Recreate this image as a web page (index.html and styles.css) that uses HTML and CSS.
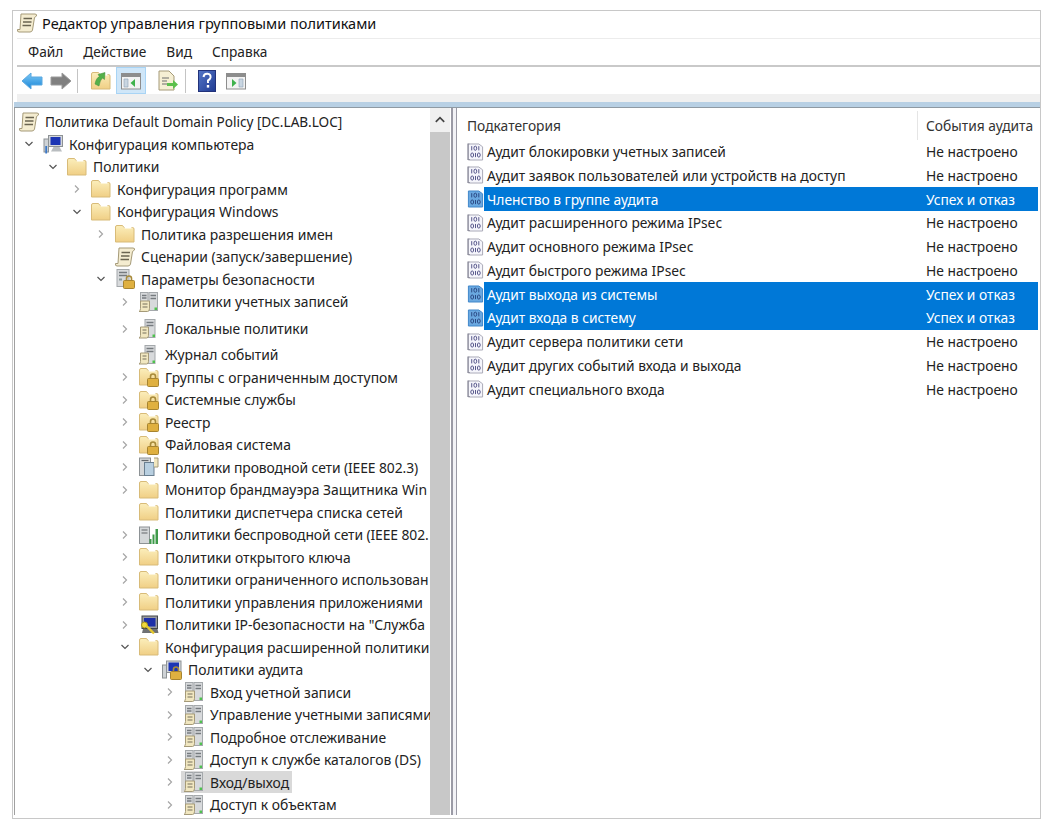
FILE: index.html
```html
<!DOCTYPE html>
<html lang="ru">
<head>
    <meta charset="UTF-8">
    <meta name="viewport" content="width=device-width, initial-scale=1.0">
    <title>Редактор управления групповыми политиками</title>
    <link rel="stylesheet" href="styles.css">
</head>
<body>
    <svg class="defs" xmlns="http://www.w3.org/2000/svg">
        <defs>
            <linearGradient id="gFolder" x1="0" y1="0" x2="0" y2="1"><stop offset="0" stop-color="#fbeebb"/><stop offset="1" stop-color="#f0cf85"/></linearGradient>
            <linearGradient id="gBlue" x1="0" y1="0" x2="0" y2="1"><stop offset="0" stop-color="#7cc8f5"/><stop offset="1" stop-color="#1a86d8"/></linearGradient>
            <linearGradient id="gHelp" x1="0" y1="0" x2="1" y2="1"><stop offset="0" stop-color="#5577c8"/><stop offset="1" stop-color="#1f3a92"/></linearGradient>
            <symbol id="chevR" viewBox="0 0 10 10"><path d="M3 1.5 L6.5 5 L3 8.5" fill="none" stroke="#a6a6a6" stroke-width="1.2"/></symbol>
            <symbol id="chevD" viewBox="0 0 10 10"><path d="M1.5 3 L5 6.5 L8.5 3" fill="none" stroke="#555" stroke-width="1.2"/></symbol>
            <symbol id="scroll" viewBox="0 0 20 20">
                <path d="M4 1 H18 Q20 1 19.500 3 L17.500 4.500 L15.500 17 Q15 19 13 19 H2 Q0 19 .5 16.500 H3 Z" fill="#f4ecd0" stroke="#a59a78"/>
                <path d="M6.500 5.500 H15 M6 9 H14.500 M5.500 12.500 H14" stroke="#6a6450" stroke-width="1.400"/>
            </symbol>
            <symbol id="folder" viewBox="0 0 20 20">
                <path d="M.5 3 Q.5 1.500 2 1.500 H7.500 L9 3.500 H17.500 Q19 3.500 19 5 V18 H.5 Z" fill="url(#gFolder)" stroke="#d8bb78"/>
                <path d="M9 2.200 H16.500 V4.500 H10 Z" fill="#fff"/>
            </symbol>
            <symbol id="lock" viewBox="0 0 20 20">
                <path d="M11.500 12 V9.500 Q11.500 7 14 7 Q16.500 7 16.500 9.500 V12" fill="none" stroke="#a78a3a" stroke-width="1.600"/>
                <rect x="8.500" y="11.500" width="11" height="8" rx="1" fill="#dfb040" stroke="#a78430"/>
            </symbol>
            <symbol id="folderLock" viewBox="0 0 20 20">
                <use href="#folder" width="20" height="20"/>
                <use href="#lock" width="20" height="20"/>
            </symbol>
            <symbol id="tower" viewBox="1 0 20 20">
                <rect x="7" y="0.500" width="10" height="18" fill="#d8dadc" stroke="#a4a8ab"/>
                <path d="M8.500 3.500 H15.500 M8.500 6.500 H15.500" stroke="#767b7f" stroke-width="1.400"/>
                <rect x="14.500" y="15.500" width="2.500" height="2.500" fill="#4ec24e"/>
                <path d="M2.500 8 H10.500 V16.500 Q10.500 19 8.500 19 H1 Q2.500 18.500 2.500 16.500 Z" fill="#f1e7c0" stroke="#a59a78"/>
                <path d="M4.500 11 H8.500 M4.500 14 H8.500" stroke="#77705c" stroke-width="1.200"/>
            </symbol>
            <symbol id="towers" viewBox="1 0 20 20">
                <rect x="2.500" y="0.500" width="7.500" height="13" fill="#d8dadc" stroke="#a4a8ab"/>
                <rect x="11" y="0.500" width="8.500" height="18" fill="#d8dadc" stroke="#a4a8ab"/>
                <path d="M4 3.500 H8.500 M4 6 H8.500 M12.500 3.500 H18 M12.500 6.500 H18" stroke="#767b7f" stroke-width="1.400"/>
                <rect x="16.500" y="15.500" width="2.500" height="2.500" fill="#4ec24e"/>
                <path d="M2.500 9 H11.500 V16.500 Q11.500 19.500 9.500 19.500 H1 Q2.500 18.500 2.500 16.500 Z" fill="#f1e7c0" stroke="#a59a78"/>
                <path d="M4.500 12 H9.500 M4.500 15 H9.500" stroke="#77705c" stroke-width="1.200"/>
            </symbol>
            <symbol id="serverLock" viewBox="0 0 20 20">
                <rect x="2" y="0.500" width="12" height="17" fill="#d8dadc" stroke="#a4a8ab"/>
                <path d="M4 3.500 H12 M4 6.500 H12" stroke="#767b7f" stroke-width="1.400"/>
                <rect x="4" y="9.500" width="3" height="2" fill="#8a9a9a"/>
                <use href="#lock" width="20" height="20"/>
            </symbol>
            <symbol id="comp" viewBox="0 0 20 20">
                <rect x="1" y="5" width="4.500" height="13" fill="#cfd3d6" stroke="#8d9295"/>
                <rect x="5.500" y="1.500" width="14" height="11" fill="#d4d7da" stroke="#8d9295"/>
                <rect x="7.500" y="3" width="10" height="8" fill="#1c35b4"/>
                <path d="M8 17.500 H19 L16.500 13 H10.500 Z" fill="#b9bdc0"/>
                <path d="M3.200 12 V19.500" stroke="#3a77c7" stroke-width="1.800"/>
            </symbol>
            <symbol id="compLock" viewBox="0 0 20 20">
                <rect x=".5" y="5" width="4" height="13" fill="#cfd3d6" stroke="#8d9295"/>
                <rect x="4.500" y="1" width="14.500" height="11.500" fill="#d4d7da" stroke="#8d9295"/>
                <rect x="6.500" y="2.500" width="10.500" height="8.500" fill="#1c35b4"/>
                <use href="#lock" width="20" height="20"/>
            </symbol>
            <symbol id="ipsec" viewBox="0 0 20 20">
                <rect x="3" y="1" width="15.500" height="12.500" fill="#9a9c9f" stroke="#44474a"/>
                <rect x="5" y="3" width="11.500" height="8.500" fill="#1d2fa8"/>
                <path d="M4 14 H18.500 L19.500 18 H3 Z" fill="#6f7174"/>
                <circle cx="5.500" cy="10" r="3" fill="#f0d83c" stroke="#a48f17"/>
                <path d="M7.500 11 L15 18.500" stroke="#e5c92e" stroke-width="2.400"/>
            </symbol>
            <symbol id="wired" viewBox="0 0 20 20">
                <rect x=".5" y="1" width="11" height="17.500" fill="#d4d7d9" stroke="#8d9295"/>
                <rect x="5.500" y="5.500" width="9.500" height="13" fill="#b8cfe0" stroke="#6a7f90"/>
                <path d="M2.500 3.500 H9.500" stroke="#62676b" stroke-width="1.200"/>
                <path d="M15 1 H19 V10 H15" fill="#f1e7c0" stroke="#a59a78"/>
            </symbol>
            <symbol id="wifi" viewBox="0 0 20 20">
                <rect x=".5" y="2" width="10" height="16.500" fill="#d4d7d9" stroke="#8d9295"/>
                <path d="M2.500 5 H8.500 M2.500 8 H8.500" stroke="#62676b" stroke-width="1.200"/>
                <path d="M10.500 19 V14 H12.500 V19 Z M13.500 19 V9.500 H15.500 V19 Z M16.500 19 V4 H19 V19 Z" fill="#3f9a4a"/>
            </symbol>
            <symbol id="bin" viewBox="0 0 18 20">
                <path d="M1.500 1.500 H12.500 L16.500 4.500 V18.500 H1.500 Z" fill="#f5f5fb" stroke="#a7a7b5"/>
                <path d="M2.500 1.500 H1 V18 H3" fill="none" stroke="#8d8d9b" stroke-width="1.200"/>
                <g fill="none" stroke="#4f4f85">
                    <ellipse cx="8.800" cy="6" rx="1.500" ry="2.200"/>
                    <ellipse cx="5.500" cy="13.200" rx="1.500" ry="2.200"/>
                    <ellipse cx="12.500" cy="13.200" rx="1.500" ry="2.200"/>
                    <path d="M5 3.800 V8.300 M12.500 3.800 V8.300 M9 11 V15.400"/>
                </g>
            </symbol>
            <symbol id="binSel" viewBox="0 0 18 20">
                <path d="M1.500 1.500 H12.500 L16.500 4.500 V18.500 H1.500 Z" fill="#6aa8e0" stroke="#3b84c8"/>
                <g fill="none" stroke="#27447f">
                    <ellipse cx="8.800" cy="6" rx="1.500" ry="2.200"/>
                    <ellipse cx="5.500" cy="13.200" rx="1.500" ry="2.200"/>
                    <ellipse cx="12.500" cy="13.200" rx="1.500" ry="2.200"/>
                    <path d="M5 3.800 V8.300 M12.500 3.800 V8.300 M9 11 V15.400"/>
                </g>
            </symbol>
        </defs>
    </svg>

    <div class="window">
        <div class="titlebar">
            <svg class="title-icon"><use href="#scroll"/></svg>
            <span>Редактор управления групповыми политиками</span>
        </div>
        <div class="menubar">
            <span>Файл</span>
            <span>Действие</span>
            <span>Вид</span>
            <span>Справка</span>
        </div>
        <div class="toolbar">
            <svg class="tool tool-back" viewBox="0 0 22 18"><path d="M1 9 L10 1 V5 H21 V13 H10 V17 Z" fill="url(#gBlue)" stroke="#5aa8e0"/></svg>
            <svg class="tool tool-fwd" viewBox="0 0 22 18"><path d="M21 9 L12 1 V5 H1 V13 H12 V17 Z" fill="#808080" stroke="#9a9a9a"/></svg>
            <div class="tool-sep"></div>
            <svg class="tool tool-up" viewBox="0 0 20 20">
                <use href="#folder" width="20" height="20"/>
                <path d="M4 13 Q5 7 8.500 5.500 L7 3.500 L14 1.500 L13.500 8.500 L11.500 7 Q9 9 8 15 Z" fill="#54b04a" stroke="#3b8c36" stroke-width=".5"/>
            </svg>
            <div class="tool-active">
                <svg class="tool-pane" viewBox="0 0 20 18">
                    <rect x=".5" y="1.500" width="19" height="15.500" fill="#f3f3f3" stroke="#8d8d8d"/>
                    <rect x=".5" y="1.500" width="19" height="3.500" fill="#8d8d8d"/>
                    <path d="M3 7 H7 V15 H3 Z" fill="#c9d6e2" stroke="#8fa3b5" stroke-width=".6"/>
                    <path d="M14 7 V15 L9.500 11 Z" fill="#3fb24c"/>
                </svg>
            </div>
            <svg class="tool tool-export" viewBox="0 0 22 22">
                <path d="M2 1 H12 L17 6 V20 H2 Z" fill="#f6efd4" stroke="#a59a78"/>
                <path d="M5 8 H12 M5 11 H10 M5 14 H10" stroke="#6d6d6d"/>
                <path d="M10 13 H16 V10 L21 14.500 L16 19 V16 H10 Z" fill="#5cc04c"/>
            </svg>
            <div class="tool-sep sep-two"></div>
            <svg class="tool tool-help" viewBox="0 0 18 22">
                <rect x=".5" y=".5" width="17" height="21" fill="url(#gHelp)" stroke="#22327a"/>
                <path d="M5.500 7 Q6 3.500 9.500 3.800 Q13 4.300 12.500 7.500 Q12 9.500 10 10.500 V13" fill="none" stroke="#fff" stroke-width="2"/>
                <rect x="8.800" y="15" width="2.400" height="2.600" fill="#fff"/>
            </svg>
            <svg class="tool-pane tool-pane-right" viewBox="0 0 20 18">
                <rect x=".5" y="1.500" width="19" height="15.500" fill="#f3f3f3" stroke="#8d8d8d"/>
                <rect x=".5" y="1.500" width="19" height="3.500" fill="#8d8d8d"/>
                <path d="M13 7 H17 V15 H13 Z" fill="#c9d6e2" stroke="#8fa3b5" stroke-width=".6"/>
                <path d="M6 7 V15 L10.500 11 Z" fill="#3fb24c"/>
            </svg>
        </div>
        <div class="strip"></div>
        <div class="band"></div>

        <div class="panes">
            <div class="tree-pane">
                <div class="tree">
                    <div class="row root"><svg class="ico"><use href="#scroll"/></svg><span>Политика Default Domain Policy [DC.LAB.LOC]</span></div>
                    <div class="row l1"><svg class="chev"><use href="#chevD"/></svg><svg class="ico"><use href="#comp"/></svg><span>Конфигурация компьютера</span></div>
                    <div class="row l2"><svg class="chev"><use href="#chevD"/></svg><svg class="ico"><use href="#folder"/></svg><span>Политики</span></div>
                    <div class="row l3"><svg class="chev"><use href="#chevR"/></svg><svg class="ico"><use href="#folder"/></svg><span>Конфигурация программ</span></div>
                    <div class="row l3"><svg class="chev"><use href="#chevD"/></svg><svg class="ico"><use href="#folder"/></svg><span>Конфигурация Windows</span></div>
                    <div class="row l4"><svg class="chev"><use href="#chevR"/></svg><svg class="ico"><use href="#folder"/></svg><span>Политика разрешения имен</span></div>
                    <div class="row l4"><span class="chev"></span><svg class="ico"><use href="#scroll"/></svg><span>Сценарии (запуск/завершение)</span></div>
                    <div class="row l4"><svg class="chev"><use href="#chevD"/></svg><svg class="ico"><use href="#serverLock"/></svg><span>Параметры безопасности</span></div>
                    <div class="row l5"><svg class="chev"><use href="#chevR"/></svg><svg class="ico"><use href="#towers"/></svg><span>Политики учетных записей</span></div>
                    <div class="row l5 gap-wide"><svg class="chev"><use href="#chevR"/></svg><svg class="ico"><use href="#tower"/></svg><span>Локальные политики</span></div>
                    <div class="row l5 gap-mid"><span class="chev"></span><svg class="ico"><use href="#tower"/></svg><span>Журнал событий</span></div>
                    <div class="row l5"><svg class="chev"><use href="#chevR"/></svg><svg class="ico"><use href="#folderLock"/></svg><span>Группы с ограниченным доступом</span></div>
                    <div class="row l5"><svg class="chev"><use href="#chevR"/></svg><svg class="ico"><use href="#folderLock"/></svg><span>Системные службы</span></div>
                    <div class="row l5"><svg class="chev"><use href="#chevR"/></svg><svg class="ico"><use href="#folderLock"/></svg><span>Реестр</span></div>
                    <div class="row l5"><svg class="chev"><use href="#chevR"/></svg><svg class="ico"><use href="#folderLock"/></svg><span>Файловая система</span></div>
                    <div class="row l5 tight"><svg class="chev"><use href="#chevR"/></svg><svg class="ico"><use href="#wired"/></svg><span>Политики проводной сети (IEEE 802.3)</span></div>
                    <div class="row l5"><svg class="chev"><use href="#chevR"/></svg><svg class="ico"><use href="#folder"/></svg><span>Монитор брандмауэра Защитника Win</span></div>
                    <div class="row l5"><span class="chev"></span><svg class="ico"><use href="#folder"/></svg><span>Политики диспетчера списка сетей</span></div>
                    <div class="row l5 tight"><svg class="chev"><use href="#chevR"/></svg><svg class="ico"><use href="#wifi"/></svg><span>Политики беспроводной сети (IEEE 802.</span></div>
                    <div class="row l5"><svg class="chev"><use href="#chevR"/></svg><svg class="ico"><use href="#folder"/></svg><span>Политики открытого ключа</span></div>
                    <div class="row l5"><svg class="chev"><use href="#chevR"/></svg><svg class="ico"><use href="#folder"/></svg><span>Политики ограниченного использован</span></div>
                    <div class="row l5"><svg class="chev"><use href="#chevR"/></svg><svg class="ico"><use href="#folder"/></svg><span>Политики управления приложениями</span></div>
                    <div class="row l5"><svg class="chev"><use href="#chevR"/></svg><svg class="ico"><use href="#ipsec"/></svg><span>Политики IP-безопасности на "Служба</span></div>
                    <div class="row l5"><svg class="chev"><use href="#chevD"/></svg><svg class="ico"><use href="#folder"/></svg><span>Конфигурация расширенной политики</span></div>
                    <div class="row l6"><svg class="chev"><use href="#chevD"/></svg><svg class="ico"><use href="#compLock"/></svg><span>Политики аудита</span></div>
                    <div class="row l7"><svg class="chev"><use href="#chevR"/></svg><svg class="ico"><use href="#towers"/></svg><span>Вход учетной записи</span></div>
                    <div class="row l7"><svg class="chev"><use href="#chevR"/></svg><svg class="ico"><use href="#towers"/></svg><span>Управление учетными записями</span></div>
                    <div class="row l7"><svg class="chev"><use href="#chevR"/></svg><svg class="ico"><use href="#towers"/></svg><span>Подробное отслеживание</span></div>
                    <div class="row l7"><svg class="chev"><use href="#chevR"/></svg><svg class="ico"><use href="#towers"/></svg><span>Доступ к службе каталогов (DS)</span></div>
                    <div class="row l7 current"><svg class="chev"><use href="#chevR"/></svg><div class="current-box"><svg class="ico"><use href="#towers"/></svg><span>Вход/выход</span></div></div>
                    <div class="row l7"><svg class="chev"><use href="#chevR"/></svg><svg class="ico"><use href="#towers"/></svg><span>Доступ к объектам</span></div>
                </div>
                <div class="scrollbar">
                    <div class="scroll-up"><svg viewBox="0 0 10 10"><path d="M1.500 6.500 L5 3 L8.500 6.500" fill="none" stroke="#444" stroke-width="1.400"/></svg></div>
                    <div class="scroll-thumb"></div>
                </div>
            </div>
            <div class="splitter"></div>
            <div class="list-pane">
                <div class="list-head">
                    <div class="col-name">Подкатегория</div>
                    <div class="col-value">События аудита</div>
                </div>
                <div class="item"><svg class="bin"><use href="#bin"/></svg><div class="cells"><div class="col-name">Аудит блокировки учетных записей</div><div class="col-value">Не настроено</div></div></div>
                <div class="item"><svg class="bin"><use href="#bin"/></svg><div class="cells"><div class="col-name">Аудит заявок пользователей или устройств на доступ</div><div class="col-value">Не настроено</div></div></div>
                <div class="item selected"><svg class="bin"><use href="#binSel"/></svg><div class="cells"><div class="col-name">Членство в группе аудита</div><div class="col-value">Успех и отказ</div></div></div>
                <div class="item"><svg class="bin"><use href="#bin"/></svg><div class="cells"><div class="col-name">Аудит расширенного режима IPsec</div><div class="col-value">Не настроено</div></div></div>
                <div class="item"><svg class="bin"><use href="#bin"/></svg><div class="cells"><div class="col-name">Аудит основного режима IPsec</div><div class="col-value">Не настроено</div></div></div>
                <div class="item"><svg class="bin"><use href="#bin"/></svg><div class="cells"><div class="col-name">Аудит быстрого режима IPsec</div><div class="col-value">Не настроено</div></div></div>
                <div class="item selected"><svg class="bin"><use href="#binSel"/></svg><div class="cells"><div class="col-name">Аудит выхода из системы</div><div class="col-value">Успех и отказ</div></div></div>
                <div class="item selected"><svg class="bin"><use href="#binSel"/></svg><div class="cells"><div class="col-name">Аудит входа в систему</div><div class="col-value">Успех и отказ</div></div></div>
                <div class="item"><svg class="bin"><use href="#bin"/></svg><div class="cells"><div class="col-name">Аудит сервера политики сети</div><div class="col-value">Не настроено</div></div></div>
                <div class="item"><svg class="bin"><use href="#bin"/></svg><div class="cells"><div class="col-name">Аудит других событий входа и выхода</div><div class="col-value">Не настроено</div></div></div>
                <div class="item"><svg class="bin"><use href="#bin"/></svg><div class="cells"><div class="col-name">Аудит специального входа</div><div class="col-value">Не настроено</div></div></div>
            </div>
        </div>
    </div>
</body>
</html>
```

FILE: styles.css
```css
* {
    box-sizing: border-box;
}
html, body {
    height: 100%;
}
body {
    margin: 0;
    padding: 10px 0 0 12px;
    background: white;
    font-family: "Noto Sans", "Open Sans", sans-serif;
    font-size: 13.9px;
    color: #222;
    overflow: hidden;
}
.defs {
    display: block;
    width: 0;
    height: 0;
}
.window {
    width: 1029px;
    height: 809px;
    border: 1px solid #c8c8c8;
    display: flex;
    flex-direction: column;
    overflow: hidden;
}
.titlebar {
    height: 27px;
    padding: 0 0 3px 4px;
    display: flex;
    align-items: center;
    font-size: 14.5px;
    color: #111;
    flex: none;
}
.title-icon {
    width: 20px;
    height: 20px;
    margin-right: 5px;
}
.menubar {
    height: 27px;
    margin-left: 4px;
    padding: 0 0 2px 11px;
    border-top: 1px solid #ececec;
    display: flex;
    align-items: center;
    gap: 20px;
    font-size: 13.7px;
    flex: none;
}
.toolbar {
    height: 29px;
    margin-left: 4px;
    border-top: 2px solid #c9c9c9;
    display: flex;
    align-items: center;
    flex: none;
}
.tool-back {
    width: 22px;
    height: 18px;
    margin-left: 4px;
}
.tool-fwd {
    width: 22px;
    height: 18px;
    margin-left: 7px;
}
.tool-sep {
    width: 1px;
    height: 24px;
    background: #c4c4c4;
    margin-left: 5px;
}
.tool-up {
    width: 20px;
    height: 20px;
    margin-left: 13px;
}
.tool-active {
    width: 30px;
    height: 27px;
    margin-left: 5px;
    background: #cfe6f8;
    border: 1px solid #a8d4f5;
    display: flex;
    align-items: center;
    justify-content: center;
}
.tool-pane {
    width: 20px;
    height: 18px;
}
.tool-export {
    width: 22px;
    height: 22px;
    margin-left: 11px;
}
.sep-two {
    margin-left: 6px;
}
.tool-help {
    width: 18px;
    height: 22px;
    margin-left: 12px;
}
.tool-pane-right {
    margin-left: 10px;
}
.strip {
    height: 8px;
    margin-left: 4px;
    background: #f0f0f0;
    flex: none;
}
.band {
    height: 6px;
    margin-left: 1px;
    background: #b8d0e4;
    border-bottom: 1px solid #8f9aa3;
    flex: none;
}
.panes {
    flex: 1;
    min-height: 0;
    margin: 0 0 3px 1px;
    display: flex;
}
.tree-pane {
    width: 436px;
    border-left: 1px solid #a0a0a0;
    display: flex;
    flex: none;
}
.tree {
    width: 415px;
    padding-top: 2.5px;
    overflow: hidden;
    flex: none;
}
.row {
    height: 22.5px;
    display: flex;
    align-items: center;
    white-space: nowrap;
}
.row.root {
    padding-left: 4px;
    font-size: 13.6px;
}
.row.gap-wide {
    margin-top: 4.5px;
}
.row.gap-mid {
    margin-top: 3.5px;
}
.row.tight {
    letter-spacing: -.1px;
}
.l1 { padding-left: 2px; }
.l2 { padding-left: 26px; }
.l3 { padding-left: 50px; }
.l4 { padding-left: 74px; }
.l5 { padding-left: 98px; }
.l6 { padding-left: 121px; }
.l7 { padding-left: 143px; }
.chev {
    width: 24px;
    height: 10px;
    margin-right: 2px;
    flex: none;
}
.ico {
    width: 20px;
    height: 20px;
    margin-right: 6px;
    flex: none;
}
.current .chev {
    margin-right: -1px;
}
.current-box {
    height: 22px;
    padding: 0 3px;
    background: #d9d9d9;
    display: flex;
    align-items: center;
}
.scrollbar {
    width: 20px;
    background: #c8c8c8;
    flex: none;
    display: flex;
    flex-direction: column;
}
.scroll-up {
    height: 24px;
    background: #f0f0f0;
    display: flex;
    align-items: center;
    justify-content: center;
    flex: none;
}
.scroll-up svg {
    width: 12px;
    height: 12px;
}
.scroll-thumb {
    flex: 1;
}
.splitter {
    width: 6px;
    margin-left: 1px;
    background: #f2f2f6;
    border-left: 2px solid #9a9aa5;
    border-right: 1px solid #9a9aa5;
    flex: none;
}
.list-pane {
    flex: 1;
    padding-top: 3px;
    margin-right: 2px;
    min-width: 0;
    font-size: 13.8px;
}
.list-head {
    height: 28.7px;
    padding-left: 10px;
    display: flex;
    align-items: center;
    color: #333;
}
.list-head .col-name {
    width: 451px;
    height: 100%;
    display: flex;
    align-items: center;
    border-right: 1px solid #e5e5e5;
}
.list-head .col-value {
    padding-left: 8px;
}
.item {
    height: 23.75px;
    padding-left: 10px;
    display: flex;
    align-items: center;
}
.bin {
    width: 17px;
    height: 20px;
    flex: none;
}
.cells {
    flex: 1;
    height: 100%;
    display: flex;
    align-items: center;
}
.cells .col-name {
    width: 433px;
    padding-left: 3px;
}
.cells .col-value {
    padding-left: 9px;
}
.item.selected .cells {
    background: #0078d7;
    color: white;
}
```
